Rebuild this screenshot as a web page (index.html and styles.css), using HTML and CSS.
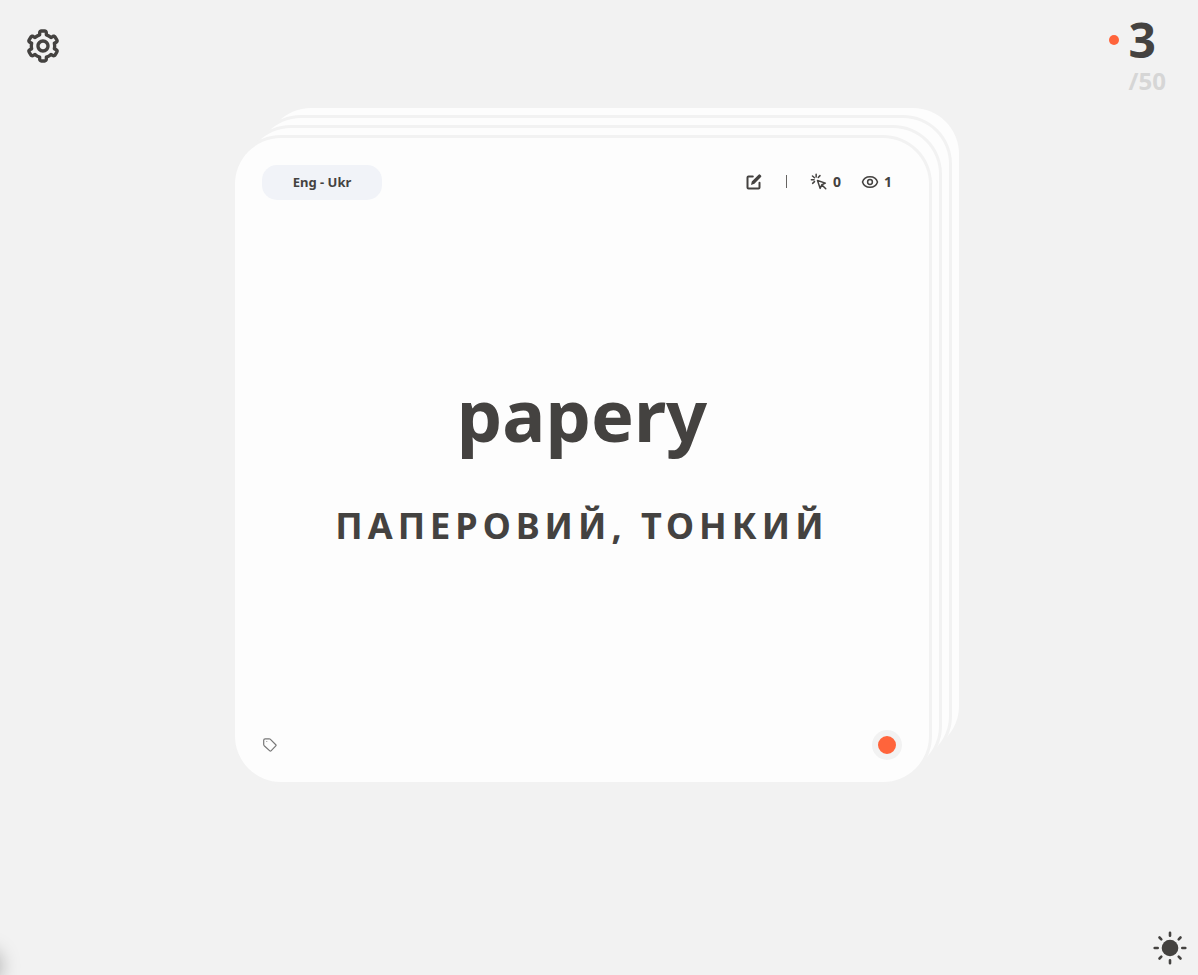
FILE: index.html
```html
<!DOCTYPE html>
<html lang="en">
<head>
<meta charset="utf-8">
<meta name="viewport" content="width=device-width, initial-scale=1">
<title>Flashcards</title>
<link rel="stylesheet" href="styles.css">
</head>
<body>
<header class="topbar">
  <button class="icon-button" type="button" aria-label="Settings">
    <svg width="40" height="40" viewBox="0 0 24 24" fill="currentColor"><path d="M12 16c2.206 0 4-1.794 4-4s-1.794-4-4-4-4 1.794-4 4 1.794 4 4 4zm0-6c1.084 0 2 .916 2 2s-.916 2-2 2-2-.916-2-2 .916-2 2-2z"/><path d="m2.845 16.136 1 1.73c.531.917 1.809 1.261 2.73.73l.529-.306A8.1 8.1 0 0 0 9 19.402V20c0 1.103.897 2 2 2h2c1.103 0 2-.897 2-2v-.598a8.132 8.132 0 0 0 1.896-1.111l.529.305c.923.53 2.198.188 2.731-.731l.999-1.729a2.001 2.001 0 0 0-.731-2.732l-.505-.292a7.718 7.718 0 0 0 0-2.224l.505-.292a2.002 2.002 0 0 0 .731-2.732l-.999-1.729c-.531-.92-1.808-1.265-2.731-.732l-.529.306A8.1 8.1 0 0 0 15 4.598V4c0-1.103-.897-2-2-2h-2c-1.103 0-2 .897-2 2v.598a8.132 8.132 0 0 0-1.896 1.111l-.529-.305c-.924-.531-2.2-.187-2.731.732l-.999 1.729a2.001 2.001 0 0 0 .731 2.732l.505.292a7.683 7.683 0 0 0 0 2.223l-.505.292a2.003 2.003 0 0 0-.731 2.733zm3.326-2.758A5.703 5.703 0 0 1 6 12c0-.462.058-.926.17-1.378a.999.999 0 0 0-.47-1.108l-1.123-.65.998-1.729 1.145.662a.997.997 0 0 0 1.188-.142 6.071 6.071 0 0 1 2.384-1.399A1 1 0 0 0 11 5.3V4h2v1.3a1 1 0 0 0 .708.956 6.083 6.083 0 0 1 2.384 1.399.999.999 0 0 0 1.188.142l1.144-.661 1 1.729-1.124.649a1 1 0 0 0-.47 1.108c.112.452.17.916.17 1.378 0 .461-.058.925-.171 1.378a1 1 0 0 0 .471 1.108l1.123.649-.998 1.729-1.145-.661a.996.996 0 0 0-1.188.142 6.071 6.071 0 0 1-2.384 1.399A1 1 0 0 0 13 18.7l.002 1.3H11v-1.3a1 1 0 0 0-.708-.956 6.083 6.083 0 0 1-2.384-1.399.992.992 0 0 0-1.188-.141l-1.144.662-1-1.729 1.124-.651a1 1 0 0 0 .471-1.108z"/></svg>
  </button>
  <div class="counter">
    <span class="counter-dot"></span>
    <div class="counter-text">
      <div class="counter-current">3</div>
      <div class="counter-total">/50</div>
    </div>
  </div>
</header>

<main class="stage">
  <article class="card">
    <div class="card-head">
      <button class="language" type="button">Eng - Ukr</button>
      <div class="stats">
        <button class="icon-button" type="button" aria-label="Edit card">
          <svg width="18" height="18" viewBox="0 0 18 18" fill="none"><path d="M7.800 3.500H3.500Q2.500 3.500 2.500 4.500V14.500Q2.500 15.500 3.500 15.500H13.500Q14.500 15.500 14.500 14.500V9.800" stroke="currentColor" stroke-width="2" stroke-linecap="round"/><path d="M6 12l.8-3.500 6.800-6.700q.8-.8 1.600-.1l.8.8q.8.800 0 1.600l-6.600 6.600z" fill="currentColor"/></svg>
        </button>
        <span class="divider"></span>
        <span class="stat"><svg width="18" height="18" viewBox="0 0 24 24" fill="none" stroke="currentColor" stroke-width="2" stroke-linejoin="round"><path d="m10 10 3.500 10.500 2.200-4.800 4.800-2.200zM16 16l5 5M8.200 1.800v3.600M3.300 4l2.700 2.300M1.800 9h3.600M3.500 13.800l2.500-2.300M13.300 3.500l-2.300 2.500" stroke-linecap="round"/></svg>0</span>
        <span class="stat"><svg width="18" height="18" viewBox="0 0 18 18" fill="none" stroke="currentColor" stroke-width="1.500"><path d="M1.500 9c1-3.300 4-5.200 7.500-5.200s6.500 1.900 7.500 5.200c-1 3.300-4 5.200-7.500 5.200S2.500 12.300 1.500 9z"/><circle cx="9" cy="9" r="2.400"/></svg>1</span>
      </div>
    </div>
    <div class="card-body">
      <h1 class="word">papery</h1>
      <p class="translation">ПАПЕРОВИЙ, ТОНКИЙ</p>
    </div>
    <div class="card-foot">
      <button class="icon-button tag" type="button" aria-label="Tags">
        <svg width="16" height="16" viewBox="0 0 16 16" fill="none" stroke="currentColor" stroke-width="1.200" stroke-linejoin="round"><path d="M3.200 1.800H7.200q.6 0 1 .4l5.600 5.500q.6.600 0 1.200l-4.800 5q-.6.600-1.200 0L2.200 8.700q-.5-.5-.5-1.100V3.200q0-1.400 1.500-1.400z"/><circle cx="4.800" cy="4.600" r=".5" fill="currentColor" stroke="none"/></svg>
      </button>
      <button class="status" type="button" aria-label="Card status"></button>
    </div>
  </article>
</main>

<footer class="bottombar">
  <button class="icon-button" type="button" aria-label="Switch theme">
    <svg width="34" height="34" viewBox="0 0 34 34" stroke="currentColor" stroke-width="2.600" stroke-linecap="round"><circle cx="17" cy="17" r="8.300" fill="currentColor" stroke="none"/><path d="M17 1.700v3M17 29.300v3M1.700 17h3M29.300 17h3M6.500 6.500l1.800 1.800M25.700 25.700l1.800 1.800M6.500 27.500l1.800-1.800M25.700 8.300l1.800-1.800"/></svg>
  </button>
</footer>
<div class="drawer-edge"></div>
</body>
</html>
```
FILE: styles.css
```css
* { box-sizing: border-box; }

:root {
  --page: #f2f2f2;
  --card: #fdfdfd;
  --ink: #444240;
  --accent: #ff643b;
}

body {
  margin: 0;
  min-height: 100vh;
  display: flex;
  flex-direction: column;
  background: var(--page);
  color: var(--ink);
  font-family: "Noto Sans", sans-serif;
  font-weight: 700;
}

button {
  border: 0;
  padding: 0;
  background: none;
  color: inherit;
  font: inherit;
  cursor: pointer;
}

svg { display: block; }

.icon-button { display: flex; }

.topbar {
  display: flex;
  justify-content: space-between;
  align-items: flex-start;
  min-height: 108px;
  padding: 16px 32px 0 23px;
}

.topbar > .icon-button { padding-top: 10px; }

.counter {
  display: flex;
  align-items: flex-start;
  gap: 10px;
}

.counter-dot {
  width: 10px;
  height: 10px;
  margin-top: 19px;
  border-radius: 50%;
  background: var(--accent);
}

.counter-current {
  font-size: 48px;
  line-height: 48px;
}

.counter-total {
  font-size: 24px;
  line-height: 34px;
  color: #d6d6d6;
}

.stage {
  display: flex;
  justify-content: center;
  padding: 30px 34px 0 0;
}

.card {
  display: flex;
  flex-direction: column;
  width: 100%;
  max-width: 694px;
  min-height: 644px;
  padding: 27px 27px 22px;
  border-radius: 46px;
  background: var(--card);
  box-shadow:
    0 0 0 3px var(--page),
    10px -10px 0 0 var(--card),
    10px -10px 0 3px var(--page),
    20px -20px 0 0 var(--card),
    20px -20px 0 3px var(--page),
    30px -30px 0 0 var(--card);
}

.card-head,
.card-foot {
  display: flex;
  justify-content: space-between;
  align-items: center;
}

.language {
  width: 120px;
  height: 35px;
  padding-bottom: 2px;
  border-radius: 15px;
  background: #f1f3f8;
  font-size: 13px;
}

.stats {
  display: flex;
  align-items: center;
  gap: 20px;
  padding: 0 10px 2px 0;
  font-size: 14px;
}

.divider {
  width: 1px;
  height: 13px;
  margin: 0 3px;
  background: #666462;
}

.stat {
  display: flex;
  align-items: center;
  gap: 5px;
}

.card-body {
  flex: 1;
  display: flex;
  flex-direction: column;
  align-items: center;
  justify-content: center;
  gap: 39px;
  padding-bottom: 16px;
  text-align: center;
}

.word,
.translation { margin: 0; }

.word {
  font-size: 72px;
  line-height: 98px;
}

.translation {
  font-size: 36px;
  line-height: 48px;
  letter-spacing: 5px;
}

.tag { color: #777; }

.status {
  width: 30px;
  height: 30px;
  border: 6px solid var(--page);
  border-radius: 50%;
  background: var(--accent);
}

.bottombar {
  display: flex;
  justify-content: flex-end;
  margin-top: auto;
  padding: 0 11px 10px;
}

.drawer-edge {
  position: fixed;
  left: -30px;
  bottom: -6px;
  width: 30px;
  height: 30px;
  border-radius: 50%;
  box-shadow: 0 0 20px rgba(0, 0, 0, 0.35);
}
```
